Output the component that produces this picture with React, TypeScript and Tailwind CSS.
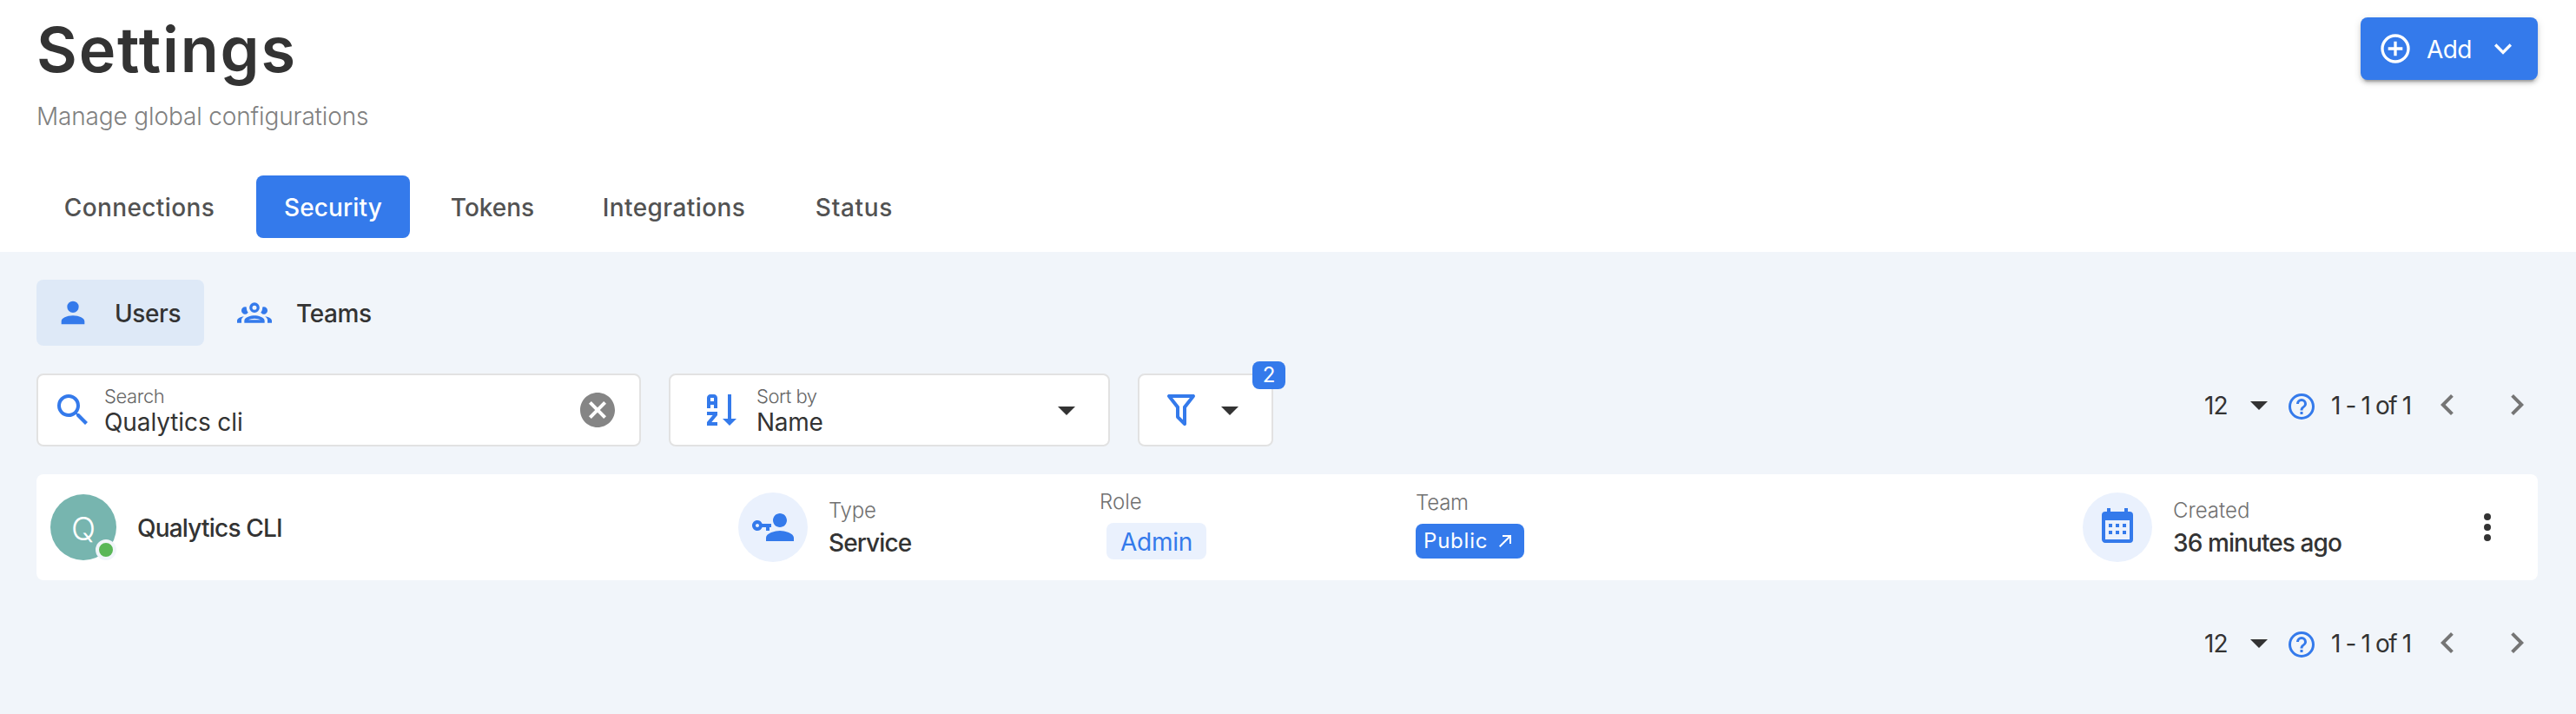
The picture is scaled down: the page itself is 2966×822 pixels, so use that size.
import React from "react";

const icons = {
  plusCircle:
    "M12,20C7.59,20 4,16.41 4,12C4,7.59 7.59,4 12,4C16.41,4 20,7.59 20,12C20,16.41 16.41,20 12,20M12,2A10,10 0 0,0 2,12A10,10 0 0,0 12,22A10,10 0 0,0 22,12A10,10 0 0,0 12,2M13,7H11V11H7V13H11V17H13V13H17V11H13V7Z",
  chevronDown: "M7.41,8.58L12,13.17L16.59,8.58L18,10L12,16L6,10L7.41,8.58Z",
  chevronLeft: "M15.41,16.58L10.83,12L15.41,7.41L14,6L8,12L14,18L15.41,16.58Z",
  chevronRight: "M8.59,16.58L13.17,12L8.59,7.41L10,6L16,12L10,18L8.59,16.58Z",
  account:
    "M12,4A4,4 0 0,1 16,8A4,4 0 0,1 12,12A4,4 0 0,1 8,8A4,4 0 0,1 12,4M12,14C16.42,14 20,15.79 20,18V20H4V18C4,15.79 7.58,14 12,14Z",
  accountGroup:
    "M12,5A3.5,3.5 0 0,0 8.5,8.5A3.5,3.5 0 0,0 12,12A3.5,3.5 0 0,0 15.5,8.5A3.5,3.5 0 0,0 12,5M12,7A1.5,1.5 0 0,1 13.5,8.5A1.5,1.5 0 0,1 12,10A1.5,1.5 0 0,1 10.5,8.5A1.5,1.5 0 0,1 12,7M5.5,8A2.5,2.5 0 0,0 3,10.5C3,11.44 3.53,12.25 4.29,12.68C4.65,12.88 5.06,13 5.5,13C5.94,13 6.35,12.88 6.71,12.68C7.08,12.47 7.39,12.17 7.62,11.81C6.89,10.86 6.5,9.7 6.5,8.5C6.5,8.41 6.5,8.31 6.5,8.22C6.2,8.08 5.86,8 5.5,8M18.5,8C18.14,8 17.8,8.08 17.5,8.22C17.5,8.31 17.5,8.41 17.5,8.5C17.5,9.7 17.11,10.86 16.38,11.81C16.5,12 16.63,12.15 16.78,12.3C16.94,12.45 17.1,12.58 17.29,12.68C17.65,12.88 18.06,13 18.5,13C18.94,13 19.35,12.88 19.71,12.68C20.47,12.25 21,11.44 21,10.5A2.5,2.5 0 0,0 18.5,8M12,14C9.66,14 5,15.17 5,17.5V19H19V17.5C19,15.17 14.34,14 12,14M4.71,14.55C2.78,14.78 0,15.76 0,17.5V19H3V17.07C3,16.06 3.69,15.22 4.71,14.55M19.29,14.55C20.31,15.22 21,16.06 21,17.07V19H24V17.5C24,15.76 21.22,14.78 19.29,14.55M12,16C13.53,16 15.24,16.5 16.23,17H7.77C8.76,16.5 10.47,16 12,16Z",
  magnify:
    "M9.5,3A6.5,6.5 0 0,1 16,9.5C16,11.11 15.41,12.59 14.44,13.73L14.71,14H15.5L20.5,19L19,20.5L14,15.5V14.71L13.73,14.44C12.59,15.41 11.11,16 9.5,16A6.5,6.5 0 0,1 3,9.5A6.5,6.5 0 0,1 9.5,3M9.5,5C7,5 5,7 5,9.5C5,12 7,14 9.5,14C12,14 14,12 14,9.5C14,7 12,5 9.5,5Z",
  closeCircle:
    "M12,2C17.53,2 22,6.47 22,12C22,17.53 17.53,22 12,22C6.47,22 2,17.53 2,12C2,6.47 6.47,2 12,2M15.59,7L12,10.59L8.41,7L7,8.41L10.59,12L7,15.59L8.41,17L12,13.41L15.59,17L17,15.59L13.41,12L17,8.41L15.59,7Z",
  sortAlpha:
    "M19 17H22L18 21L14 17H17V3H19M11 13V15L7.67 19H11V21H5V19L8.33 15H5V13M9 3H7C5.9 3 5 3.9 5 5V11H7V9H9V11H11V5C11 3.9 10.11 3 9 3M9 7H7V5H9Z",
  menuDown: "M7,10L12,15L17,10H7Z",
  filter:
    "M15,19.88C15.04,20.18 14.94,20.5 14.71,20.71C14.32,21.1 13.69,21.1 13.3,20.71L9.29,16.7C9.06,16.47 8.96,16.16 9,15.87V10.75L4.21,4.62C3.87,4.19 3.95,3.56 4.38,3.22C4.57,3.08 4.78,3 5,3V3H19V3C19.22,3 19.43,3.08 19.62,3.22C20.05,3.56 20.13,4.19 19.79,4.62L15,10.75V19.88M7.04,5L11,10.06V15.58L13,17.58V10.05L16.96,5H7.04Z",
  help: "M11,18H13V16H11V18M12,2A10,10 0 0,0 2,12A10,10 0 0,0 12,22A10,10 0 0,0 22,12A10,10 0 0,0 12,2M12,20C7.59,20 4,16.41 4,12C4,7.59 7.59,4 12,4C16.41,4 20,7.59 20,12C20,16.41 16.41,20 12,20M12,6A4,4 0 0,0 8,10H10A2,2 0 0,1 12,8A2,2 0 0,1 14,10C14,12 11,11.75 11,15H13C13,12.75 16,12.5 16,10A4,4 0 0,0 12,6Z",
  accountKey:
    "M11 10V12H10V14H8V12H5.83C5.42 13.17 4.31 14 3 14C1.34 14 0 12.66 0 11S1.34 8 3 8C4.31 8 5.42 8.83 5.83 10H11M3 10C2.45 10 2 10.45 2 11S2.45 12 3 12 4 11.55 4 11 3.55 10 3 10M16 14C18.67 14 24 15.34 24 18V20H8V18C8 15.34 13.33 14 16 14M16 12C13.8 12 12 10.2 12 8S13.8 4 16 4 20 5.8 20 8 18.2 12 16 12Z",
  arrowTopRight: "M5,17.59L15.59,7H9V5H19V15H17V8.41L6.41,19L5,17.59Z",
  calendar:
    "M9,10V12H7V10H9M13,10V12H11V10H13M17,10V12H15V10H17M19,3A2,2 0 0,1 21,5V19A2,2 0 0,1 19,21H5C3.89,21 3,20.1 3,19V5A2,2 0 0,1 5,3H6V1H8V3H16V1H18V3H19M19,19V8H5V19H19M9,14V16H7V14H9M13,14V16H11V14H13M17,14V16H15V14H17Z",
  dotsVertical:
    "M12,16A2,2 0 0,1 14,18A2,2 0 0,1 12,20A2,2 0 0,1 10,18A2,2 0 0,1 12,16M12,10A2,2 0 0,1 14,12A2,2 0 0,1 12,14A2,2 0 0,1 10,12A2,2 0 0,1 12,10M12,4A2,2 0 0,1 14,6A2,2 0 0,1 12,8A2,2 0 0,1 10,6A2,2 0 0,1 12,4Z",
};

interface IconProps {
  name: keyof typeof icons;
  className?: string;
}

const Icon: React.FC<IconProps> = ({ name, className = "size-12" }) => (
  <svg viewBox="0 0 24 24" fill="currentColor" className={`shrink-0 ${className}`}>
    <path d={icons[name]} />
  </svg>
);

const tabs = [
  { label: "Connections", width: "w-[237px] tracking-[0.4px]", active: false },
  { label: "Security", width: "w-[177px] tracking-[0.1px]", active: true },
  { label: "Tokens", width: "w-[158px]", active: false },
  { label: "Integrations", width: "w-[228px] tracking-[0.4px]", active: false },
  { label: "Status", width: "w-[155px] tracking-[0.7px]", active: false },
];

const Pagination: React.FC = () => (
  <div className="flex h-12 items-center text-[28px] leading-none">
    <span className="mt-0.5 w-[39px] tracking-[-0.8px]">12</span>
    <Icon name="menuDown" />
    <Icon name="help" className="mt-1 ml-[7px] size-9 text-[#347aeb]" />
    <span className="mt-0.5 ml-4 w-[110px] tracking-[-1.4px] whitespace-nowrap">1 - 1 of 1</span>
    <Icon name="chevronLeft" className="size-12 text-[#757575]" />
    <Icon name="chevronRight" className="ml-8 size-12 text-[#757575]" />
  </div>
);

const App: React.FC = () => {
  return (
    <div className="flex h-[822px] w-[2966px] flex-col bg-[#f1f5fa] font-['Inter',sans-serif] text-[#333333]">
      {/* Header */}
      <header className="flex h-[290px] flex-col bg-white pr-[44px] pl-[42px]">
        <div className="flex h-[202px] items-start justify-between">
          <div className="flex flex-col">
            <h1 className="mt-[21px] text-[72px] leading-none font-semibold tracking-[1.8px]">
              Se<span className="tracking-[-0.6px]">t</span>tings
            </h1>
            <p className="mt-[27px] text-[28px] leading-none font-light tracking-[-0.15px] text-[#808080]">
              Manage global configurations
            </p>
          </div>
          <button className="mt-5 flex h-[72px] w-[204px] items-center rounded-lg bg-[#347aeb] pl-5 text-[28px] leading-none text-white shadow-[0_6px_2px_-4px_rgba(0,0,0,0.2),0_4px_4px_rgba(0,0,0,0.14),0_2px_10px_rgba(0,0,0,0.12)]">
            <Icon name="plusCircle" className="size-10" />
            <span className="mt-0.5 ml-4 w-[68px] text-left tracking-[-0.6px]">Add</span>
            <Icon name="chevronDown" className="size-10" />
          </button>
        </div>

        <nav className="flex gap-4">
          {tabs.map((tab) => (
            <button
              key={tab.label}
              className={`flex h-[72px] items-center justify-center rounded-lg pt-0.5 text-[28px] leading-none font-medium ${tab.width} ${
                tab.active ? "bg-[#347aeb] text-white" : "text-[#525252]"
              }`}
            >
              {tab.label}
            </button>
          ))}
        </nav>
      </header>

      <main className="flex flex-col pr-[44px] pl-[42px]">
        {/* Users / Teams */}
        <div className="mt-8 flex h-[76px]">
          <button className="flex w-[193px] items-center rounded-lg bg-[#dee9f7] pl-[22px] text-[28px] leading-none font-medium tracking-[-0.4px]">
            <Icon name="account" className="size-10 text-[#347aeb]" />
            <span className="mt-0.5 ml-7">Users</span>
          </button>
          <button className="flex items-center pl-[38px] text-[28px] leading-none font-medium tracking-[-0.4px]">
            <Icon name="accountGroup" className="size-10 text-[#347aeb]" />
            <span className="mt-0.5 ml-7">Teams</span>
          </button>
        </div>

        {/* Filters */}
        <div className="mt-8 flex h-[84px] items-start">
          <div className="flex h-[84px] w-[696px] items-center rounded-lg border-2 border-[#e2e2e2] bg-white pr-[24px] pl-4">
            <Icon name="magnify" className="size-12 text-[#347aeb]" />
            <div className="ml-3 flex flex-1 flex-col">
              <span className="text-[22px] leading-none font-[350] tracking-[-0.4px] text-[#666666]">Search</span>
              <span className="mt-[5px] text-[28px] leading-none tracking-[-0.1px]">Qualytics cli</span>
            </div>
            <Icon name="closeCircle" className="size-12 text-[#858585]" />
          </div>

          <div className="ml-8 flex h-[84px] w-[508px] items-center rounded-lg border-2 border-[#e2e2e2] bg-white pr-[24px] pl-8">
            <Icon name="sortAlpha" className="size-12 text-[#347aeb]" />
            <div className="ml-[19px] flex flex-1 flex-col">
              <span className="text-[22px] leading-none font-[350] tracking-[-0.5px] text-[#666666]">Sort by</span>
              <span className="mt-[5px] text-[28px] leading-none tracking-[-0.3px]">Name</span>
            </div>
            <Icon name="menuDown" />
          </div>

          <button className="relative ml-8 flex h-[84px] w-[156px] items-center rounded-lg border-2 border-[#e2e2e2] bg-white pl-6">
            <Icon name="filter" className="size-12 text-[#347aeb]" />
            <Icon name="menuDown" className="ml-2 size-12" />
            <span className="absolute -top-4 -right-4 flex h-8 w-[38px] items-center justify-center rounded-lg bg-[#347aeb] text-2xl leading-none text-white">
              2
            </span>
          </button>

          <div className="mt-3 ml-auto">
            <Pagination />
          </div>
        </div>

        {/* User row */}
        <div className="mt-8 flex h-[122px] items-center rounded-lg bg-white pl-4">
          <div className="relative flex size-[76px] items-center justify-center rounded-full bg-[#77b5af] pt-0.5 text-[37px] leading-none font-light text-white">
            Q
            <span className="absolute right-0 bottom-0 size-6 rounded-full border-4 border-[#f1f5fa] bg-[#5ab757]" />
          </div>
          <span className="mt-0.5 ml-6 w-[692px] text-[28px] leading-none font-medium tracking-[-0.8px]">
            Qualytics CLI
          </span>

          <div className="flex w-[417px] items-center">
            <div className="flex size-20 items-center justify-center rounded-full bg-[#eaf1fd] text-[#347aeb]">
              <Icon name="accountKey" />
            </div>
            <div className="ml-6 flex flex-col">
              <span className="text-2xl leading-none font-[350] tracking-[-0.2px] text-[#707070]">Type</span>
              <span className="mt-[11px] text-[28px] leading-none font-medium tracking-[-0.9px]">Service</span>
            </div>
          </div>

          <div className="-mt-1 flex w-[363px] flex-col items-start">
            <span className="-ml-px text-2xl leading-none font-[350] text-[#707070]">Role</span>
            <span className="mt-3 ml-[7px] flex h-[42px] w-[115px] items-center justify-center rounded-lg bg-[#eaf1fd] pt-0.5 text-[28px] leading-none tracking-[-0.3px] text-[#347aeb]">
              Admin
            </span>
          </div>

          <div className="-mt-1 flex w-[768px] flex-col items-start">
            <span className="text-2xl leading-none font-[350] tracking-[-0.2px] text-[#707070]">Team</span>
            <span className="mt-3 flex h-10 w-[125px] items-center rounded-lg bg-[#347aeb] pl-[9px] text-2xl leading-none tracking-[0.8px] text-white">
              Public
              <Icon name="arrowTopRight" className="ml-2 size-6" />
            </span>
          </div>

          <div className="flex flex-1 items-center">
            <div className="flex size-20 items-center justify-center rounded-full bg-[#eaf1fd] text-[#347aeb]">
              <Icon name="calendar" />
            </div>
            <div className="ml-6 flex flex-col">
              <span className="text-2xl leading-none font-[350] text-[#707070]">Created</span>
              <span className="mt-[11px] text-[28px] leading-none font-medium tracking-[-0.9px]">36 minutes ago</span>
            </div>
          </div>
          <Icon name="dotsVertical" className="mr-[34px] size-12" />
        </div>

        <div className="mt-12 flex justify-end">
          <Pagination />
        </div>
      </main>
    </div>
  );
};

export default App;
